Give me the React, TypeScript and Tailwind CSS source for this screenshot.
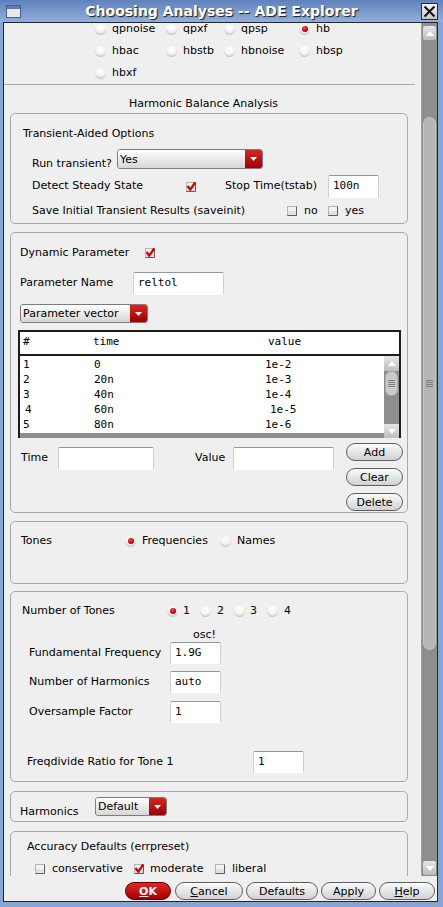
import React from "react";

const sans = "font-['DejaVu_Sans',sans-serif]";
const mono = "font-['DejaVu_Sans_Mono',monospace]";

const Radio = ({ on = false }: { on?: boolean }) => (
  <span className="flex h-[11px] w-[11px] shrink-0 items-center justify-center rounded-full bg-[radial-gradient(circle_at_50%_30%,#ffffff_0%,#f3f3f3_50%,#c2c2c2_82%,#8e8e8e_100%)]">
    {on && (
      <span className="h-[6px] w-[6px] rounded-full bg-[radial-gradient(circle_at_40%_35%,#ff5050_0%,#d00000_55%,#7a0000_100%)]" />
    )}
  </span>
);

const Check = ({ on = false }: { on?: boolean }) => (
  <svg width="10" height="10" viewBox="0 0 10 10" className="shrink-0 overflow-visible">
    <rect x="0.5" y="0.5" width="9" height="9" fill="#e2e2e2" stroke="#b4b4b4" />
    <rect x="1" y="1" width="8" height="4" fill="#f2f2f2" />
    <path d="M0.5 9.5 H9.5 V0.5" stroke="#5e5e5e" fill="none" />
    {on && <path d="M1.5 4 L4.3 7.6 L9.2 0.5" stroke="#d40000" strokeWidth="2.3" fill="none" />}
  </svg>
);

const Field = ({ cls, v = "" }: { cls: string; v?: string }) => (
  <div
    className={`flex items-center rounded-t-[2px] border border-[#cfcfcf] border-t-[#969696] border-b-white bg-white pl-[4px] ${mono} text-[11px] ${cls}`}
  >
    {v}
  </div>
);

const Drop = ({ label, cls }: { label: string; cls: string }) => (
  <div className={`flex overflow-hidden rounded-[3px] border border-[#7c7c7c] ${cls}`}>
    <div className="flex flex-1 items-center bg-linear-to-b from-white to-[#d6d6d6] pl-[2px] leading-none">{label}</div>
    <div className="flex w-[17px] items-center justify-center bg-linear-to-b from-[#dc2222] to-[#9c0000]">
      <svg width="7" height="4" viewBox="0 0 7 4">
        <path d="M0 0H7L3.5 4Z" fill="white" />
      </svg>
    </div>
  </div>
);

const Btn = ({ children, cls, red = false }: { children: React.ReactNode; cls: string; red?: boolean }) => (
  <div
    className={`flex h-[18px] shrink-0 items-center justify-center rounded-full border leading-none ${
      red
        ? "border-[#5a0000] bg-linear-to-b from-[#e42424] to-[#a20000] font-bold text-white"
        : "border-[#5e5e5e] bg-linear-to-b from-[#fbfbfb] to-[#d2d2d2]"
    } ${cls}`}
  >
    {children}
  </div>
);

const Arrow = ({ up }: { up?: boolean }) => (
  <svg width="8" height="5" viewBox="0 0 8 5">
    <path d={up ? "M0 5H8L4 0Z" : "M0 0H8L4 5Z"} fill="white" />
  </svg>
);

const Grip = () => (
  <div className="flex flex-col gap-[1px]">
    <div className="h-px w-[7px] bg-[#7c7c7c]" />
    <div className="h-px w-[7px] bg-[#7c7c7c]" />
    <div className="h-px w-[7px] bg-[#7c7c7c]" />
    <div className="h-px w-[7px] bg-[#7c7c7c]" />
  </div>
);

const Box = ({ cls, children }: { cls: string; children: React.ReactNode }) => (
  <div className={`ml-[6px] flex w-[398px] shrink-0 flex-col rounded-[5px] border border-[#a9a9a9] ${cls}`}>{children}</div>
);

const analyses = [
  ["qpnoise", "qpxf", "qpsp", "hb"],
  ["hbac", "hbstb", "hbnoise", "hbsp"],
  ["hbxf"],
];
const colW = ["w-[71px]", "w-[58px]", "w-[75px]", "w-[60px]"];

const rows = [
  ["1", "0", "1e-2"],
  ["2", "20n", "1e-3"],
  ["3", "40n", "1e-4"],
  ["4", "60n", "1e-5"],
  ["5", "80n", "1e-6"],
];

export default function App() {
  return (
    <div className={`flex h-[907px] w-[443px] flex-col bg-[#86a4d4] text-[11px] text-black ${sans}`}>
      {/* title bar */}
      <div className="grid h-[22px] shrink-0 grid-cols-[1fr_auto_1fr] items-center bg-linear-to-b from-[#5f82bd] to-[#93afda]">
        <svg width="15" height="13" viewBox="0 0 15 13" className="ml-[6px]">
          <rect x="0.5" y="0.5" width="14" height="12" fill="#e9e9e2" stroke="#44609a" />
          <rect x="1" y="1" width="13" height="3" fill="#5a7bb4" />
        </svg>
        <div className="text-[14px] font-bold leading-none text-white [text-shadow:1px_1px_1px_#1c1c1c]">
          Choosing Analyses -- ADE Explorer
        </div>
        <div className="mr-[5px] flex h-[17px] w-[17px] items-center justify-center justify-self-end border border-[#2c2c2c] bg-linear-to-b from-[#f4f4f4] to-[#c6c6c6]">
          <svg width="13" height="13" viewBox="0 0 13 13">
            <path d="M1.5 1.5L11.5 11.5M11.5 1.5L1.5 11.5" stroke="#111" strokeWidth="2" />
          </svg>
        </div>
      </div>

      <div className="flex flex-1 flex-col pb-[5px] pl-[3px] pr-[5px]">
        <div className="flex flex-1 flex-col border border-[#262626] bg-[#efefef]">
          <div className="flex h-[853px] shrink-0">
            {/* scrolled content */}
            <div className="flex h-[853px] w-[417px] flex-col overflow-hidden">
              <div className="-mt-[5px] ml-[91px] flex flex-col">
                {analyses.map((r, i) => (
                  <div key={i} className="flex h-[22px] items-center">
                    {r.map((a, j) => (
                      <div key={a} className={`flex items-center gap-[6px] ${colW[j]}`}>
                        <Radio on={a === "hb"} />
                        <span>{a}</span>
                      </div>
                    ))}
                  </div>
                ))}
              </div>
              <div className="h-px w-[411px] shrink-0 bg-[#a9a9a9]" />
              <div className="ml-[125px] mt-[11px] flex h-[16px] shrink-0 items-center">Harmonic Balance Analysis</div>

              {/* transient-aided */}
              <Box cls="mt-[1px] h-[111px]">
                <div className="ml-[12px] mt-[12px] flex h-[16px] items-center">Transient-Aided Options</div>
                <div className="mt-[7px] flex h-[20px] items-start">
                  <span className="ml-[21px] mt-[7px] w-[85px] leading-[16px]">Run transient?</span>
                  <Drop label="Yes" cls="h-[20px] w-[146px]" />
                </div>
                <div className="mt-[6px] flex h-[23px] items-center">
                  <span className="ml-[21px] w-[154px]">Detect Steady State</span>
                  <Check on />
                  <span className="ml-[29px] w-[103px]">Stop Time(tstab)</span>
                  <Field cls="h-[23px] w-[51px]" v="100n" />
                </div>
                <div className="mt-[3px] flex h-[20px] items-center">
                  <span className="ml-[21px] w-[255px]">Save Initial Transient Results (saveinit)</span>
                  <Check />
                  <span className="ml-[7px] w-[24px]">no</span>
                  <Check />
                  <span className="ml-[7px]">yes</span>
                </div>
              </Box>

              {/* dynamic parameter */}
              <Box cls="mt-[8px] h-[281px]">
                <div className="mt-[12px] flex h-[16px] items-center">
                  <span className="ml-[9px] w-[125px]">Dynamic Parameter</span>
                  <Check on />
                </div>
                <div className="mt-[11px] flex h-[23px] items-center">
                  <span className="ml-[9px] w-[113px]">Parameter Name</span>
                  <Field cls="h-[23px] w-[91px]" v="reltol" />
                </div>
                <Drop label="Parameter vector" cls="ml-[9px] mt-[9px] h-[19px] w-[128px]" />
                <div className={`ml-[7px] mt-[7px] flex h-[108px] w-[383px] flex-col border-2 border-[#1c1c1c] bg-white ${mono}`}>
                  <div className="flex h-[22px] shrink-0 pl-[3px] pt-[2px] leading-[15px]">
                    <span className="w-[70px]">#</span>
                    <span className="w-[175px]">time</span>
                    <span>value</span>
                  </div>
                  <div className="h-[2px] shrink-0 bg-[#1c1c1c]" />
                  <div className="flex flex-1">
                    <div className="flex flex-1 flex-col">
                      <div className="flex-1 overflow-hidden pl-[3px] pt-[2px]">
                        {rows.map((r) => (
                          <div key={r[0]} className="flex h-[15px] items-center">
                            <span className={r[0] === "4" ? "ml-[2px] w-[69px]" : "w-[71px]"}>{r[0]}</span>
                            <span className={r[0] === "4" ? "w-[176px]" : "w-[171px]"}>{r[1]}</span>
                            <span>{r[2]}</span>
                          </div>
                        ))}
                      </div>
                      <div className="h-[5px] shrink-0 bg-[#8e8e8e]" />
                    </div>
                    <div className="flex w-[15px] flex-col bg-[#8e8e8e]">
                      <div className="flex h-[15px] items-center justify-center bg-linear-to-b from-[#e6e6e6] to-[#bdbdbd]">
                        <Arrow up />
                      </div>
                      <div className="mx-[1px] flex h-[25px] items-center justify-center rounded-[6px] border border-[#a8a8a8] bg-[#cacaca]">
                        <Grip />
                      </div>
                      <div className="flex-1" />
                      <div className="flex h-[14px] items-center justify-center bg-linear-to-b from-[#e6e6e6] to-[#bdbdbd]">
                        <Arrow />
                      </div>
                    </div>
                  </div>
                </div>
                <div className="mt-[5px] flex items-start">
                  <div className="mt-[4px] flex h-[23px] items-center">
                    <span className="ml-[10px] w-[37px]">Time</span>
                    <Field cls="h-[23px] w-[96px]" />
                    <span className="ml-[41px] w-[38px]">Value</span>
                    <Field cls="h-[23px] w-[101px]" />
                  </div>
                  <div className="ml-[12px] flex flex-col gap-[7px]">
                    <Btn cls="w-[57px]">Add</Btn>
                    <Btn cls="w-[57px]">Clear</Btn>
                    <Btn cls="w-[57px]">Delete</Btn>
                  </div>
                </div>
              </Box>

              {/* tones */}
              <Box cls="mt-[8px] h-[63px]">
                <div className="mt-[11px] flex h-[16px] items-center">
                  <span className="ml-[10px] w-[104px]">Tones</span>
                  <Radio on />
                  <span className="ml-[6px] w-[78px]">Frequencies</span>
                  <Radio />
                  <span className="ml-[6px]">Names</span>
                </div>
              </Box>

              {/* number of tones */}
              <Box cls="mt-[7px] h-[191px]">
                <div className="mt-[11px] flex h-[16px] items-center">
                  <span className="ml-[11px] w-[145px]">Number of Tones</span>
                  <Radio on />
                  <span className="ml-[5px] w-[17px]">1</span>
                  <Radio />
                  <span className="ml-[6px] w-[17px]">2</span>
                  <Radio />
                  <span className="ml-[5px] w-[17px]">3</span>
                  <Radio />
                  <span className="ml-[6px]">4</span>
                </div>
                <div className="ml-[182px] mt-[9px] flex h-[14px] items-center">osc!</div>
                <div className="flex h-[22px] items-center">
                  <span className="ml-[18px] w-[141px]">Fundamental Frequency</span>
                  <Field cls="h-[22px] w-[51px]" v="1.9G" />
                </div>
                <div className="mt-[7px] flex h-[22px] items-center">
                  <span className="ml-[18px] w-[141px]">Number of Harmonics</span>
                  <Field cls="h-[22px] w-[51px]" v="auto" />
                </div>
                <div className="mt-[8px] flex h-[22px] items-center">
                  <span className="ml-[18px] w-[141px]">Oversample Factor</span>
                  <Field cls="h-[22px] w-[51px]" v="1" />
                </div>
                <div className="mt-[28px] flex h-[22px] items-center">
                  <span className="ml-[16px] w-[226px]">Freqdivide Ratio for Tone 1</span>
                  <Field cls="h-[22px] w-[51px]" v="1" />
                </div>
              </Box>

              {/* harmonics */}
              <Box cls="mt-[9px] h-[31px]">
                <div className="mt-[5px] flex h-[19px] items-start">
                  <span className="ml-[9px] mt-[7px] w-[75px] leading-[16px]">Harmonics</span>
                  <Drop label="Default" cls="h-[19px] w-[72px]" />
                </div>
              </Box>

              {/* accuracy */}
              <Box cls="mt-[9px] h-[80px]">
                <div className="ml-[16px] mt-[7px] flex h-[16px] items-center">Accuracy Defaults (errpreset)</div>
                <div className="mt-[6px] flex h-[16px] items-center">
                  <span className="ml-[24px]" />
                  <Check />
                  <span className="ml-[7px] w-[82px]">conservative</span>
                  <Check on />
                  <span className="ml-[6px] w-[65px]">moderate</span>
                  <Check />
                  <span className="ml-[7px]">liberal</span>
                </div>
              </Box>
            </div>

            {/* main scrollbar */}
            <div className="flex w-[16px] flex-col border-l border-[#a0a0a0] bg-[#8e8e8e]">
              <div className="mx-[1px] mt-[3px] flex h-[14px] items-center justify-center rounded-[2px] bg-linear-to-b from-[#e6e6e6] to-[#bcbcbc]">
                <Arrow up />
              </div>
              <div className="mx-[1px] mt-[77px] flex h-[533px] items-center justify-center rounded-[7px] border border-[#c6c6c6] bg-[#b6b6b6]">
                <Grip />
              </div>
              <div className="flex-1" />
              <div className="mx-[1px] mb-[1px] flex h-[14px] items-center justify-center rounded-[2px] bg-linear-to-b from-[#e6e6e6] to-[#bcbcbc]">
                <Arrow />
              </div>
            </div>
          </div>

          {/* bottom buttons */}
          <div className="flex h-[25px] shrink-0 pl-[121px] pt-[6px]">
            <Btn red cls="w-[46px]">
              <span className="underline">O</span>K
            </Btn>
            <Btn cls="ml-[4px] w-[68px]">
              <span className="underline">C</span>ancel
            </Btn>
            <Btn cls="ml-[3px] w-[72px]">Defaults</Btn>
            <Btn cls="ml-[3px] w-[55px]">Apply</Btn>
            <Btn cls="ml-[3px] w-[56px]">
              <span className="underline">H</span>elp
            </Btn>
          </div>
        </div>
      </div>
    </div>
  );
}
